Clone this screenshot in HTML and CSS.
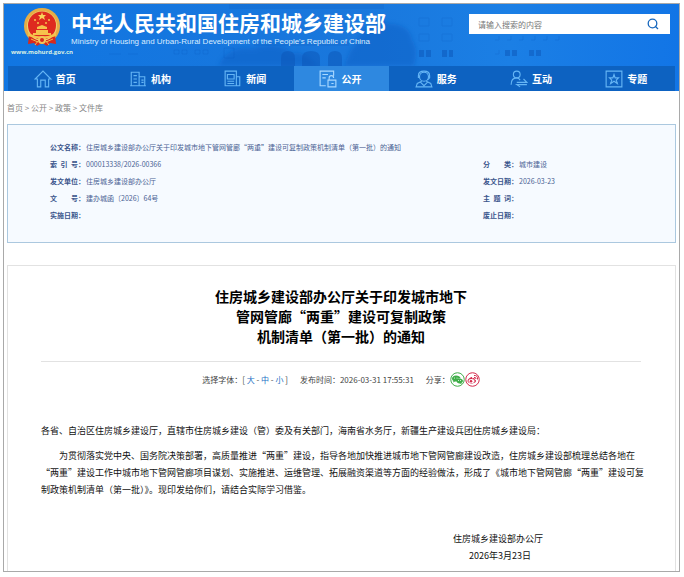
FILE: index.html
```html
<!DOCTYPE html>
<html lang="zh-CN">
<head>
<meta charset="utf-8">
<meta name="viewport" content="width=device-width, initial-scale=1">
<title>住房城乡建设部办公厅关于印发城市地下管网管廊“两重”建设可复制政策机制清单（第一批）的通知</title>
<link rel="stylesheet" href="styles.css">
</head>
<body>
<header class="header">
  <svg class="backdrop" viewBox="0 0 675 87" preserveAspectRatio="xMidYMin slice" aria-hidden="true">
    <defs>
      <linearGradient id="sky" x1="0" y1="0" x2="1" y2="0">
        <stop offset="0" stop-color="#1176e2"/><stop offset=".5" stop-color="#1977dc"/><stop offset=".75" stop-color="#1b7fe5"/><stop offset="1" stop-color="#1275e6"/>
      </linearGradient>
      <filter id="soft"><feGaussianBlur stdDeviation="2"/></filter>
    </defs>
    <rect width="675" height="87" fill="url(#sky)"/>
    <g fill="#0f5fc4" opacity=".5" filter="url(#soft)">
      <path d="M215 62c4-14 20-20 34-17 12-6 32-4 38 4 14-2 20 6 26 13zM340 62c4-8 6-18 12-22 4-18 20-26 34-20 16 0 22 10 22 16 6 8 4 18 2 26z"/>
    </g>
    <path d="M225 0h155v5H225zM250 38h95v4h-95z" fill="#0f5fc4" opacity=".2"/>
    <g fill="#0c56b8" opacity=".5">
      <path d="M277 62V54q0-7 7-7t7 7v8zM298 62V54q0-7 9-7t9 7v8zM324 62V54q0-7 7-7t7 7v8z"/>
      <path d="M415 46h5v7h-5zM422 46h5v7h-5zM438 46h5v7h-5zM445 46h4v7h-4zM501 46h5v6h-5zM508 46h5v6h-5zM525 46h5v6h-5zM532 46h5v6h-5z"/>
    </g>
    <g fill="none" stroke="#0d5cc0" opacity=".25">
      <path d="M415 14h10v8h-10zM438 14h10v8h-10zM415 30h10v7h-10zM438 30h10v7h-10zM170 46h5v4h-5zM178 46h5v4h-5zM191 46h5v4h-5zM199 46h5v4h-5zM220 44h10v10h-10zM105 50h12M124 50h10"/>
      <path d="M491 36h4v-4M503 36h4v-4M515 36h4v-4M527 36h4v-4M539 36h4v-4M551 36h4v-4M491 50h4v-4"/>
    </g>
  </svg>
  <div class="masthead">
    <a class="emblem" href="#">
      <svg width="38" height="40" viewBox="0 0 38 40" role="img" aria-label="国徽">
        <circle cx="19" cy="18" r="18" fill="#e6ad45"/>
        <path d="M6 27l-1 9 6-1 3 3 5-3 5 3 3-3 6 1-1-9z" fill="#d9291c"/>
        <circle cx="19" cy="18" r="15" fill="#f0d070"/>
        <circle cx="19" cy="17.500" r="14" fill="#de2a1f"/>
        <path d="M19 4l1 3h3l-2 2 1 3-3-2-3 2 1-3-2-2h3z" fill="#f8d35c"/>
        <g fill="#f6c34c"><circle cx="12" cy="12" r="1"/><circle cx="26" cy="12" r="1"/><circle cx="15" cy="15" r="1"/><circle cx="23" cy="15" r="1"/>
        <path d="M14 19l5-2 5 2v2h-10zM13 22h12v3h3v2H10v-2h3zM5 25q14 7 28 0v3q-14 6-28 0z"/></g>
        <circle cx="19" cy="32" r="4" fill="#f2c65b"/><circle cx="19" cy="32" r="2" fill="#d9291c"/>
        <path d="M8 31l7 3M30 31l-7 3M12 37l3-4M26 37l-3-4" stroke="#f4bb4a" fill="none"/>
      </svg>
      <span class="domain">www.mohurd.gov.cn</span>
    </a>
    <div class="brand">
      <div class="brand-name">中华人民共和国住房和城乡建设部</div>
      <div class="brand-en">Ministry of Housing and Urban-Rural Development of the People's Republic of China</div>
    </div>
    <form class="search" role="search">
      <input class="search-input" type="search" placeholder="请输入搜索的内容" aria-label="搜索">
      <button class="search-button" type="button" aria-label="搜索">
        <svg width="12" height="12" viewBox="0 0 12 12" fill="none" stroke="#1767bd" stroke-width="1.3"><circle cx="5.500" cy="5.500" r="4.300"/><path d="M8 8l3 3"/></svg>
      </button>
    </form>
  </div>
  <nav class="nav">
    <a class="nav-item" href="#"><svg class="nav-icon" viewBox="0 0 16 16"><path d="M1 8l7-7 7 7h-2v7h-3V9H6v6H3V8z"/></svg>首页</a>
    <a class="nav-item" href="#"><svg class="nav-icon" viewBox="0 0 16 16"><path d="M2 14V2h7v12M9 6h5v8M1 14h14M4 5h3M4 8h3M4 11h3M11 9h2M11 11h2"/></svg>机构</a>
    <a class="nav-item" href="#"><svg class="nav-icon" viewBox="0 0 16 16"><path d="M1 1h10v13H1zM11 6h3v8h-3M3 4h6v4H3zM3 10h6M3 12h6"/></svg>新闻</a>
    <a class="nav-item active" href="#" aria-current="page"><svg class="nav-icon" viewBox="0 0 16 16"><path d="M6 14H1V1h12v4M3 4h5M3 7h3M8 9h7v6H8zM9 9V7q0-2 2-2t2 2M11 12h2"/></svg>公开</a>
    <a class="nav-item" href="#"><svg class="nav-icon" viewBox="0 0 16 16"><circle cx="8" cy="6" r="4"/><path d="M3 7V5q0-4 5-4t5 4v2l-2 2M6 10l-4 2-1 3h14l-1-3-4-2M5 11l3 3 3-3"/></svg>服务</a>
    <a class="nav-item" href="#"><svg class="nav-icon" viewBox="0 0 16 16"><circle cx="6" cy="4" r="3"/><path d="M1 13q0-6 5-6 2 0 3 2M6 11h9l-3-3M15 13H6l3 2"/></svg>互动</a>
    <a class="nav-item" href="#"><svg class="nav-icon" viewBox="0 0 16 16"><path d="M1 1h14v14H1zM8 4l1 3h3l-2 2 1 3-3-2-3 2 1-3-2-2h3z"/></svg>专题</a>
  </nav>
</header>
<main class="main">
  <nav class="crumbs" aria-label="当前位置"><a href="#">首页</a> &gt; <a href="#">公开</a> &gt; <a href="#">政策</a> &gt; <a href="#">文件库</a></nav>
  <dl class="info">
    <div class="field wide"><dt><span>公文名称</span>：</dt><dd>住房城乡建设部办公厅关于印发城市地下管网管廊“两重”建设可复制政策机制清单（第一批）的通知</dd></div>
    <div class="field"><dt><span>索 引 号</span>：</dt><dd>000013338/2026-00366</dd></div>
    <div class="field"><dt><span>分 类</span>：</dt><dd>城市建设</dd></div>
    <div class="field"><dt><span>发文单位</span>：</dt><dd>住房城乡建设部办公厅</dd></div>
    <div class="field"><dt><span>发文日期</span>：</dt><dd>2026-03-23</dd></div>
    <div class="field"><dt><span>文 号</span>：</dt><dd>建办城函〔2026〕64号</dd></div>
    <div class="field"><dt><span>主 题 词</span>：</dt><dd></dd></div>
    <div class="field"><dt><span>实施日期</span>：</dt><dd></dd></div>
    <div class="field"><dt><span>废止日期</span>：</dt><dd></dd></div>
  </dl>
  <article class="article">
    <h1 class="title">住房城乡建设部办公厅关于印发城市地下<br>管网管廊“两重”建设可复制政策<br>机制清单（第一批）的通知</h1>
    <div class="tools">
      <div>选择字体：[ <button class="size" type="button">大</button> - <button class="size" type="button">中</button> - <button class="size" type="button">小</button> ]</div>
      <div>发布时间：<time>2026-03-31 17:55:31</time></div>
      <div class="share">分享：
        <a href="#" aria-label="微信"><svg width="15" height="15" viewBox="0 0 30 30"><circle cx="15" cy="15" r="13.500" fill="#fff" stroke="#3fae49" stroke-width="2"/><path d="M12 7c-5 0-8 3-8 6 0 2 1 4 3 5l-1 3 4-2h3c0-5 4-7 8-7-1-3-4-5-9-5zM19 13c-4 0-6 2-6 5s3 5 6 5l4 1v-2c6-4 2-9-4-9z" fill="#3fae49"/><g fill="#fff"><circle cx="9" cy="12" r="1"/><circle cx="14" cy="12" r="1"/><circle cx="17" cy="17" r="1"/><circle cx="21" cy="17" r="1"/></g></svg></a>
        <a href="#" aria-label="微博"><svg width="15" height="15" viewBox="0 0 30 30"><circle cx="15" cy="15" r="13.500" fill="#fff" stroke="#d52b4d" stroke-width="2"/><path d="M13 10c-4 1-8 5-8 8 0 7 17 6 17 0 0-2-2-3-3-3 1-3-1-4-5-2 1-2 0-3-1-3z" fill="#d52b4d"/><ellipse cx="13" cy="18" rx="6" ry="4" fill="#fff"/><circle cx="12" cy="18.500" r="2.500" fill="#d52b4d"/><path d="M18 7q8-1 7 8M18 11q4-1 4 3" fill="none" stroke="#d52b4d" stroke-width="2"/></svg></a>
      </div>
    </div>
    <div class="content">
      <p>各省、自治区住房城乡建设厅，直辖市住房城乡建设（管）委及有关部门，海南省水务厅，新疆生产建设兵团住房城乡建设局：</p>
      <p class="indent">为贯彻落实党中央、国务院决策部署，高质量推进“两重”建设，指导各地加快推进城市地下管网管廊建设改造，住房城乡建设部梳理总结各地在“两重”建设工作中城市地下管网管廊项目谋划、实施推进、运维管理、拓展融资渠道等方面的经验做法，形成了《城市地下管网管廊“两重”建设可复制政策机制清单（第一批）》。现印发给你们，请结合实际学习借鉴。</p>
    </div>
    <footer class="signature">
      <div>住房城乡建设部办公厅</div>
      <div class="date">2026年3月23日</div>
    </footer>
  </article>
</main>
</body>
</html>
```
FILE: styles.css
```css
* {
  box-sizing: border-box;
}

body {
  display: flex;
  flex-direction: column;
  min-height: calc(100vh - 8px);
  margin: 3px 4px 5px 3px;
  border: 1px solid #a9a9a9;
  background: #fff;
  color: #111;
  font-family: "Noto Sans CJK SC", "Noto Sans", sans-serif;
  font-size: 9px;
  line-height: 17px;
}

a {
  color: inherit;
  text-decoration: none;
}

button,
input {
  margin: 0;
  padding: 0;
  border: 0;
  background: none;
  font: inherit;
}

.header {
  position: relative;
  color: #fff;
}

.backdrop {
  position: absolute;
  inset: 0;
  width: 100%;
  height: 100%;
}

.masthead {
  position: relative;
  display: flex;
  align-items: flex-start;
  height: 62px;
  padding: 4px 9px 0 8px;
}

.emblem {
  display: flex;
  flex-direction: column;
  align-items: center;
  width: 59px;
  padding-left: 1px;
}

.domain {
  color: #d8f0e4;
  font: bold 6px/8px "Open Sans", sans-serif;
}

.brand {
  flex: 1;
  white-space: nowrap;
}

.brand-name {
  font-size: 21px;
  font-weight: 700;
  line-height: 28px;
}

.brand-en {
  color: #d9ecff;
  font: 8px/12px "Liberation Sans", sans-serif;
}

.search {
  display: flex;
  width: 201px;
  height: 20px;
  margin-top: 6px;
  background: #fff;
}

.search-input {
  flex: 1;
  min-width: 0;
  padding-left: 9px;
  color: #333;
  font-size: 8px;
}

.search-input::placeholder {
  color: #777;
}

.search-button {
  display: grid;
  place-items: center;
  width: 34px;
}

.nav {
  position: relative;
  display: grid;
  grid-template-columns: repeat(7, 1fr);
  height: 25px;
  margin: 0 4px;
  background: #0d62c1;
}

.nav-item {
  display: flex;
  align-items: center;
  justify-content: center;
  gap: 4px;
  padding-right: 2px;
  font-size: 10px;
  font-weight: 700;
}

.nav-item.active {
  background: #2e88e0;
}

.nav-icon {
  width: 18px;
  height: 18px;
  fill: none;
  stroke: #65b5f5;
}

.active .nav-icon {
  stroke: #a9d8ff;
}

.main {
  display: flex;
  flex: 1;
  flex-direction: column;
  padding: 0 3px;
}

.crumbs {
  margin: 8px 0;
  color: #858585;
  font-size: 8px;
}

.info {
  display: grid;
  grid-template-columns: 433px 1fr;
  margin: 0 0 22px;
  padding: 14px 42px 18px;
  border: 1px solid #abc8df;
  background: #f6faff;
  color: #4a6294;
  font-size: 7px;
}

.field {
  display: flex;
}

.wide {
  grid-column: 1 / -1;
}

dt {
  display: flex;
  width: 36px;
  color: #3a558c;
  font-weight: 700;
}

dt span {
  width: 28px;
  text-align-last: justify;
}

dd {
  margin: 0;
}

.article {
  flex: 1;
  padding: 20px 34px 6px 33px;
  border: 1px solid #e2e2e2;
  border-bottom: 0;
}

.title {
  margin: 0;
  padding-bottom: 15px;
  border-bottom: 1px solid #e2e2e2;
  color: #000;
  font-size: 14px;
  font-weight: 700;
  line-height: 20px;
  text-align: center;
}

.tools {
  display: flex;
  justify-content: center;
  gap: 12px;
  margin: 9px 0 34px;
  color: #444;
  font-size: 8px;
}

.size {
  color: #1b70c4;
  cursor: pointer;
}

.share {
  display: flex;
  align-items: center;
}

.share a {
  display: flex;
}

.content {
  margin-right: -4px;
  color: #111;
}

.content p {
  margin: 0 0 8px;
}

.indent {
  text-indent: 2em;
}

.signature {
  width: max-content;
  margin: 32px 98px 0 auto;
  text-align: center;
}

.date {
  padding-left: 4px;
}
```
